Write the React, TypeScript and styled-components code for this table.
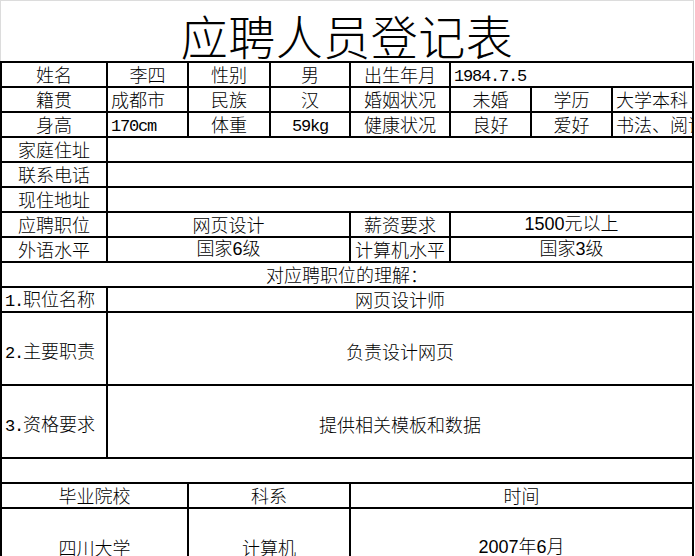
import React from "react";
import styled, { createGlobalStyle } from "styled-components";

const GlobalStyle = createGlobalStyle`
  html, body {
    margin: 0;
    padding: 0;
    background: #ffffff;
    overflow: hidden;
  }
  * { box-sizing: border-box; }
`;

const CJK = `"Noto Sans CJK SC", "Noto Sans CJK JP", sans-serif`;

const Sheet = styled.div`
  width: 695px;
  height: 556px;
  overflow: hidden;
  background: #fff;
  font-family: ${CJK};
  color: #000;
`;

const Title = styled.div`
  width: 694px;
  height: 61px;
  padding-top: 6px;
  line-height: 55px;
  font-size: 47px;
  font-weight: 300;
  text-align: center;
  border-top: 1px solid #dcdcdc;
  border-left: 1px solid #dcdcdc;
  border-right: 1px solid #dcdcdc;
  font-family: ${CJK};
  letter-spacing: 0.5px;
`;

const Grid = styled.div`
  display: grid;
  width: 694px;
  grid-template-columns: 106px 81px 82px 80px 100px 81px 81px 81px;
  grid-template-rows: repeat(10, 25px) 73px 73px 25px 25px 73px;
  border-top: 2px solid #000;
  border-left: 2px solid #000;
`;

const Cell = styled.div<{
  $span: number;
  $align: "l" | "c";
  $tall: boolean;
  $sans: boolean;
  $clip: boolean;
}>`
  grid-column: span ${(p) => p.$span};
  display: flex;
  align-items: center;
  justify-content: ${(p) => (p.$align === "l" ? "flex-start" : "center")};
  padding-top: ${(p) => (p.$tall ? "6px" : "0")};
  padding-left: ${(p) => (p.$align === "l" ? "3px" : "0")};
  border-right: 2px solid #000;
  border-bottom: 2px solid #000;
  font-size: 18px;
  font-weight: 300;
  line-height: 23px;
  white-space: nowrap;
  overflow: ${(p) => (p.$clip ? "hidden" : "visible")};
  font-family: ${(p) => (p.$sans ? `"Liberation Sans", ${CJK}` : CJK)};
`;

const Content = styled.span`
  display: block;
  white-space: nowrap;
`;

const Mono = styled.span`
  font-family: "Liberation Mono", monospace;
  font-size: 17px;
  letter-spacing: -1.2px;
`;

type CellDef = {
  t?: React.ReactNode;
  span?: number;
  align?: "l" | "c";
  sans?: boolean;
  clip?: boolean;
};

type RowDef = { tall?: boolean; cells: CellDef[] };

const rows: RowDef[] = [
  {
    cells: [
      { t: "姓名" },
      { t: "李四" },
      { t: "性别" },
      { t: "男" },
      { t: "出生年月" },
      { t: <Mono>1984.7.5</Mono>, span: 3, align: "l" },
    ],
  },
  {
    cells: [
      { t: "籍贯" },
      { t: "成都市", align: "l" },
      { t: "民族" },
      { t: "汉" },
      { t: "婚姻状况" },
      { t: "未婚" },
      { t: "学历" },
      { t: "大学本科", align: "l" },
    ],
  },
  {
    cells: [
      { t: "身高" },
      { t: <Mono>170cm</Mono>, align: "l" },
      { t: "体重" },
      { t: <Mono>59kg</Mono> },
      { t: "健康状况" },
      { t: "良好" },
      { t: "爱好" },
      { t: "书法、阅读", align: "l", clip: true },
    ],
  },
  { cells: [{ t: "家庭住址" }, { span: 7 }] },
  { cells: [{ t: "联系电话" }, { span: 7 }] },
  { cells: [{ t: "现住地址" }, { span: 7 }] },
  {
    cells: [
      { t: "应聘职位" },
      { t: "网页设计", span: 3 },
      { t: "薪资要求" },
      { t: "1500元以上", span: 3, sans: true },
    ],
  },
  {
    cells: [
      { t: "外语水平" },
      { t: "国家6级", span: 3, sans: true },
      { t: "计算机水平" },
      { t: "国家3级", span: 3, sans: true },
    ],
  },
  { cells: [{ t: "对应聘职位的理解：", span: 8 }] },
  {
    cells: [
      { t: <><Mono>1.</Mono>职位名称</>, align: "l" },
      { t: "网页设计师", span: 7 },
    ],
  },
  {
    tall: true,
    cells: [
      { t: <><Mono>2.</Mono>主要职责</>, align: "l" },
      { t: "负责设计网页", span: 7 },
    ],
  },
  {
    tall: true,
    cells: [
      { t: <><Mono>3.</Mono>资格要求</>, align: "l" },
      { t: "提供相关模板和数据", span: 7 },
    ],
  },
  { cells: [{ span: 8 }] },
  {
    cells: [
      { t: "毕业院校", span: 2 },
      { t: "科系", span: 2 },
      { t: "时间", span: 4 },
    ],
  },
  {
    tall: true,
    cells: [
      { t: "四川大学", span: 2 },
      { t: "计算机", span: 2 },
      { t: "2007年6月", span: 4, sans: true },
    ],
  },
];

export default function App() {
  return (
    <>
      <GlobalStyle />
      <Sheet>
        <Title>应聘人员登记表</Title>
        <Grid>
          {rows.map((row, ri) =>
            row.cells.map((c, ci) => (
              <Cell
                key={`${ri}-${ci}`}
                $span={c.span ?? 1}
                $align={c.align ?? "c"}
                $tall={!!row.tall}
                $sans={!!c.sans}
                $clip={!!c.clip}
              >
                {c.t !== undefined && <Content>{c.t}</Content>}
              </Cell>
            ))
          )}
        </Grid>
      </Sheet>
    </>
  );
}
